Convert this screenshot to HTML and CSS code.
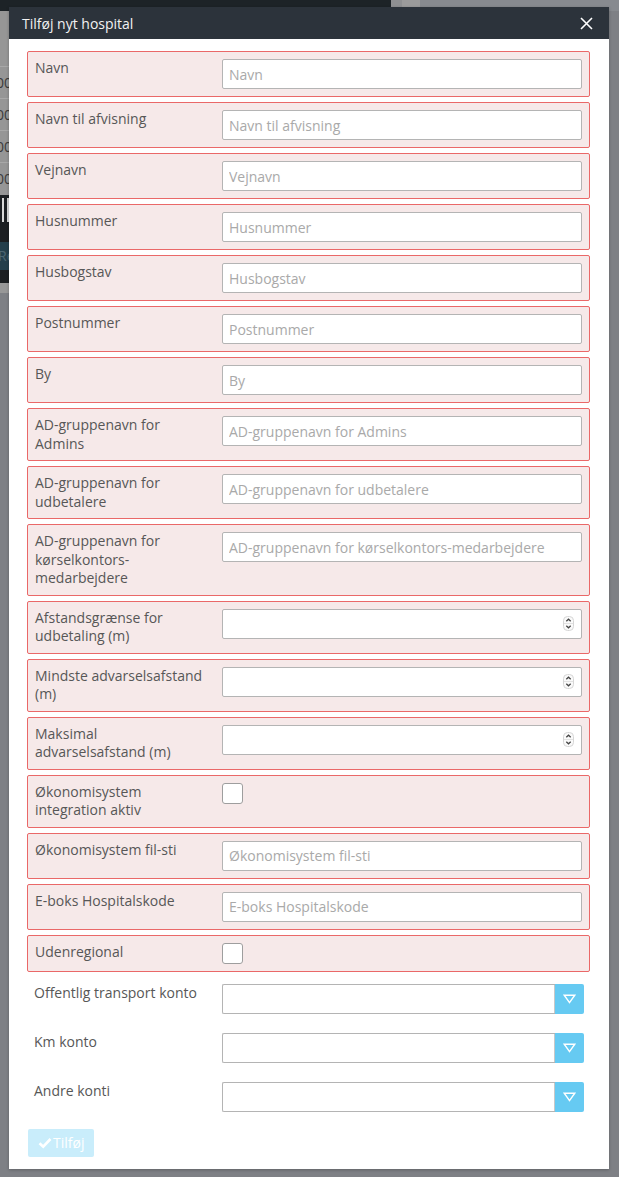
FILE: index.html
```html
<!DOCTYPE html>
<html lang="da">
<head>
<meta charset="utf-8">
<title>Tilføj nyt hospital</title>
<link rel="stylesheet" href="styles.css">
</head>
<body>
<div class="backdrop">
  <div class="bg-top">
    <div class="bg-top-dark"></div>
    <div class="bg-top-a"></div>
    <div class="bg-top-b"></div>
    <div class="bg-top-c"></div>
  </div>
  <div class="bg-head"></div>
  <div class="bg-row">100</div>
  <div class="bg-row">100</div>
  <div class="bg-row">100</div>
  <div class="bg-row last">100</div>
  <div class="bg-dark"><span class="bg-bar"></span><span class="bg-bar"></span></div>
  <div class="bg-teal">Re</div>
  <div class="bg-dark2"></div>
  <div class="bg-gray"></div>
</div>

<div class="modal">
  <div class="modal-header">
    <span class="modal-title">Tilføj nyt hospital</span>
    <svg class="close" width="13" height="13" viewBox="0 0 13 13"><path d="M1 1 L12 12 M12 1 L1 12" stroke="#fff" stroke-width="1.6" fill="none"/></svg>
  </div>
  <div class="modal-body">
    <div class="row err"><label class="lbl">Navn</label><input class="inp" placeholder="Navn"></div>
    <div class="row err"><label class="lbl">Navn til afvisning</label><input class="inp" placeholder="Navn til afvisning"></div>
    <div class="row err"><label class="lbl">Vejnavn</label><input class="inp" placeholder="Vejnavn"></div>
    <div class="row err"><label class="lbl">Husnummer</label><input class="inp" placeholder="Husnummer"></div>
    <div class="row err"><label class="lbl">Husbogstav</label><input class="inp" placeholder="Husbogstav"></div>
    <div class="row err"><label class="lbl">Postnummer</label><input class="inp" placeholder="Postnummer"></div>
    <div class="row err"><label class="lbl">By</label><input class="inp" placeholder="By"></div>
    <div class="row err"><label class="lbl">AD-gruppenavn for Admins</label><input class="inp" placeholder="AD-gruppenavn for Admins"></div>
    <div class="row err"><label class="lbl">AD-gruppenavn for udbetalere</label><input class="inp" placeholder="AD-gruppenavn for udbetalere"></div>
    <div class="row err"><label class="lbl">AD-gruppenavn for kørselkontors-medarbejdere</label><input class="inp" placeholder="AD-gruppenavn for kørselkontors-medarbejdere"></div>
    <div class="row err"><label class="lbl">Afstandsgrænse for udbetaling (m)</label>
      <div class="num"><span class="num-fill"></span><svg class="spin" width="11" height="15" viewBox="0 0 11 15"><rect x="0.5" y="0.5" width="10" height="14" rx="4" fill="#fafafa" stroke="#d6d6d6"/><line x1="1" y1="7.5" x2="10" y2="7.5" stroke="#e2e2e2"/><path d="M3.3 5.3 L5.5 3.2 L7.7 5.3" stroke="#444" stroke-width="1.2" fill="none"/><path d="M3.3 9.7 L5.5 11.8 L7.7 9.7" stroke="#444" stroke-width="1.2" fill="none"/></svg></div>
    </div>
    <div class="row err"><label class="lbl">Mindste advarselsafstand (m)</label>
      <div class="num"><span class="num-fill"></span><svg class="spin" width="11" height="15" viewBox="0 0 11 15"><rect x="0.5" y="0.5" width="10" height="14" rx="4" fill="#fafafa" stroke="#d6d6d6"/><line x1="1" y1="7.5" x2="10" y2="7.5" stroke="#e2e2e2"/><path d="M3.3 5.3 L5.5 3.2 L7.7 5.3" stroke="#444" stroke-width="1.2" fill="none"/><path d="M3.3 9.7 L5.5 11.8 L7.7 9.7" stroke="#444" stroke-width="1.2" fill="none"/></svg></div>
    </div>
    <div class="row err"><label class="lbl">Maksimal advarselsafstand (m)</label>
      <div class="num"><span class="num-fill"></span><svg class="spin" width="11" height="15" viewBox="0 0 11 15"><rect x="0.5" y="0.5" width="10" height="14" rx="4" fill="#fafafa" stroke="#d6d6d6"/><line x1="1" y1="7.5" x2="10" y2="7.5" stroke="#e2e2e2"/><path d="M3.3 5.3 L5.5 3.2 L7.7 5.3" stroke="#444" stroke-width="1.2" fill="none"/><path d="M3.3 9.7 L5.5 11.8 L7.7 9.7" stroke="#444" stroke-width="1.2" fill="none"/></svg></div>
    </div>
    <div class="row err"><label class="lbl">Økonomisystem integration aktiv</label><span class="chk"></span></div>
    <div class="row err"><label class="lbl">Økonomisystem fil-sti</label><input class="inp" placeholder="Økonomisystem fil-sti"></div>
    <div class="row err"><label class="lbl">E-boks Hospitalskode</label><input class="inp" placeholder="E-boks Hospitalskode"></div>
    <div class="row err"><label class="lbl">Udenregional</label><span class="chk"></span></div>

    <div class="row plain"><label class="lbl">Offentlig transport konto</label>
      <div class="sel"><span class="sel-box"></span><span class="sel-btn"><svg width="13" height="10" viewBox="0 0 13 10"><path d="M1.2 1.2 H11.8 L6.5 8.6 Z" fill="none" stroke="#fff" stroke-width="1.4" stroke-linejoin="miter"/></svg></span></div>
    </div>
    <div class="row plain"><label class="lbl">Km konto</label>
      <div class="sel"><span class="sel-box"></span><span class="sel-btn"><svg width="13" height="10" viewBox="0 0 13 10"><path d="M1.2 1.2 H11.8 L6.5 8.6 Z" fill="none" stroke="#fff" stroke-width="1.4" stroke-linejoin="miter"/></svg></span></div>
    </div>
    <div class="row plain"><label class="lbl">Andre konti</label>
      <div class="sel"><span class="sel-box"></span><span class="sel-btn"><svg width="13" height="10" viewBox="0 0 13 10"><path d="M1.2 1.2 H11.8 L6.5 8.6 Z" fill="none" stroke="#fff" stroke-width="1.4" stroke-linejoin="miter"/></svg></span></div>
    </div>

    <div class="actions">
      <button class="btn" type="button"><svg width="14" height="12" viewBox="0 0 14 12"><path d="M1.5 6.2 L5.2 9.6 L12.5 2" fill="none" stroke="#fff" stroke-width="2.6"/></svg>Tilføj</button>
    </div>
  </div>
</div>
</body>
</html>
```

FILE: styles.css
```css
html, body {
  margin: 0;
  padding: 0;
}
body {
  width: 619px;
  height: 1177px;
  overflow: hidden;
  background: #7e8085;
  font-family: "Open Sans", "DejaVu Sans", sans-serif;
  position: relative;
}

/* page behind the dimmed backdrop */
.backdrop {
  display: flex;
  flex-direction: column;
}
.bg-top {
  display: flex;
  height: 11px;
}
.bg-top-dark { width: 391px; background: #1d2327; }
.bg-top-a { width: 11px; background: #8f9092; }
.bg-top-b { width: 18px; background: #9b9b9b; }
.bg-top-c { flex: 1; background: #878a8f; }
.bg-head {
  height: 55px;
  border-bottom: 1px solid #a8a8a8;
  background: #969696;
  width: 200px;
}
.bg-row {
  height: 31px;
  border-bottom: 1px solid #a8a8a8;
  background: #969696;
  color: #3a3a3a;
  font-size: 14px;
  line-height: 31px;
  margin-left: -12px;
  width: 200px;
}
.bg-row.last { border-bottom: 0; height: 32px; }
.bg-dark {
  height: 47px;
  background: #1c1f22;
  display: flex;
  gap: 3px;
  padding-left: 2px;
  padding-top: 3px;
  box-sizing: border-box;
  width: 200px;
}
.bg-bar {
  width: 2px;
  height: 24px;
  background: #d8d8d8;
}
.bg-teal {
  height: 28px;
  background: #243f4c;
  color: #4d6672;
  font-size: 14px;
  line-height: 28px;
  margin-left: -2px;
  width: 200px;
}
.bg-dark2 { height: 13px; background: #1c1f22; width: 200px; }
.bg-gray { height: 10px; background: #989898; width: 200px; }

/* modal (overlay) */
.modal {
  position: absolute;
  left: 9px;
  top: 7px;
  width: 600px;
  height: 1162px;
  background: #fff;
  box-shadow: 0 1px 3px rgba(0, 0, 0, 0.25);
  display: flex;
  flex-direction: column;
}
.modal-header {
  height: 32px;
  background: #2c333b;
  display: flex;
  align-items: center;
  justify-content: space-between;
  padding: 0 16px 0 13px;
  box-sizing: border-box;
}
.modal-title {
  color: #f2f2f2;
  font-size: 14px;
  line-height: 1;
  padding-top: 1px;
}
.close { display: block; margin-top: 1px; }

.modal-body {
  padding: 12px 19px 0 18px;
}

.row {
  display: grid;
  grid-template-columns: 187px 1fr;
  align-items: start;
  padding: 7px;
  margin-bottom: 5px;
  border: 1px solid transparent;
  border-radius: 2px;
}
.row.err {
  background: #f6e9e9;
  border-color: #ea6868;
}
.row.plain {
  border: 0;
  padding: 7px;
  grid-template-columns: 188px 1fr;
}
.lbl {
  font-size: 14px;
  line-height: 18.5px;
  color: #575757;
  padding-right: 15px;
}
.inp {
  display: block;
  box-sizing: border-box;
  width: 100%;
  height: 30px;
  margin: 0;
  border: 1px solid #b4b4b4;
  border-radius: 2px;
  background: #fff;
  padding: 0 6px;
  font-family: "Open Sans", "DejaVu Sans", sans-serif;
  font-size: 14px;
  color: #555;
  outline: none;
}
.inp::placeholder {
  color: #a9a9a9;
}
.num {
  display: flex;
  align-items: center;
  box-sizing: border-box;
  height: 30px;
  border: 1px solid #b4b4b4;
  border-radius: 2px;
  background: #fff;
  padding-right: 7px;
}
.num-fill { flex: 1; }
.spin { display: block; }

.chk {
  display: block;
  width: 21px;
  height: 21px;
  box-sizing: border-box;
  border: 1px solid #9e9e9e;
  border-radius: 3px;
  background: #fff;
}

.sel {
  display: flex;
  height: 30px;
  margin-right: -1px;
}
.sel-box {
  flex: 1;
  border: 1px solid #b4b4b4;
  border-right: 0;
  border-radius: 2px 0 0 2px;
  background: #fff;
  box-shadow: inset -1px 0 0 #c8c8c8;
}
.sel-btn {
  width: 29px;
  background: #66caf2;
  border-radius: 0 2px 2px 0;
  display: flex;
  align-items: center;
  justify-content: center;
}
.sel-btn svg { display: block; margin-top: 1px; }

.actions {
  padding: 5px 0 0 1px;
}
.btn {
  display: inline-flex;
  align-items: center;
  gap: 1px;
  height: 28px;
  padding: 0 10px 0 10px;
  background: #c9edfb;
  border: 0;
  border-radius: 2px;
  color: #fff;
  font-family: "Open Sans", "DejaVu Sans", sans-serif;
  font-size: 14px;
  cursor: default;
}
.btn svg { display: block; }
```
